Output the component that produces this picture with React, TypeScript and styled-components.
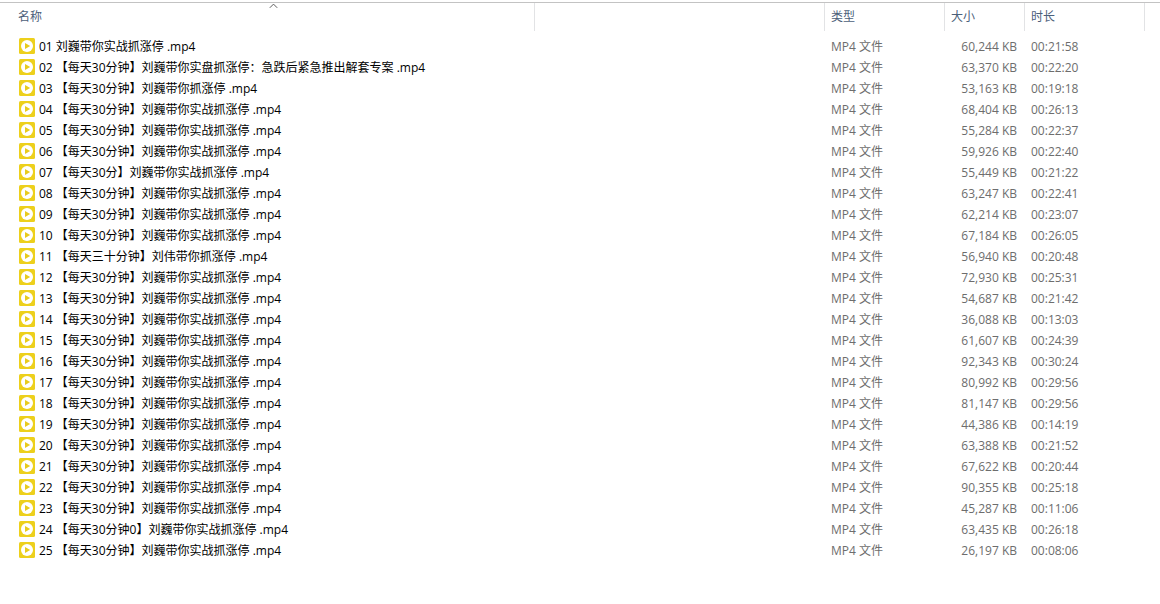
import React from "react";
import styled, { createGlobalStyle } from "styled-components";

const GlobalStyle = createGlobalStyle`
  * { box-sizing: border-box; }
  body {
    margin: 0;
    background: #ffffff;
    font-family: "Open Sans", "Noto Sans CJK SC", sans-serif;
    font-size: 12px;
    line-height: 20px;
    color: #000000;
  }
`;

const FilePane = styled.main`
  margin-top: 2px;
  border-top: 1px solid #c3c3c3;
  padding-left: 12px;
`;

const FileTable = styled.table`
  width: 100%;
  table-layout: fixed;
  border-collapse: separate;
  border-spacing: 0;
`;

const Column = styled.col<{ $width?: number }>`
  width: ${({ $width }) => ($width ? `${$width}px` : "auto")};
`;

const HeaderCell = styled.th<{ $divider?: boolean }>`
  position: relative;
  height: 28px;
  padding: 0;
  font-weight: 400;
  text-align: left;
  vertical-align: middle;
  border-right: 1px solid ${({ $divider = true }) => ($divider ? "#e2e3e5" : "transparent")};
`;

const HeaderButton = styled.button`
  display: block;
  width: 100%;
  border: 0;
  padding: 0 6px;
  background: transparent;
  color: #4c607a;
  font: inherit;
  line-height: 20px;
  text-align: left;
  cursor: default;
`;

const SortCaret = styled.svg`
  position: absolute;
  top: 0;
  left: 50%;
  transform: translateX(-50%);
`;

const FileRows = styled.tbody`
  &::before {
    content: "";
    display: block;
    height: 5px;
  }
`;

const Cell = styled.td<{ $align?: "left" | "right" }>`
  height: 21px;
  padding: 1px 8px 0 6px;
  color: #6d6d6d;
  text-align: ${({ $align = "left" }) => $align};
  vertical-align: top;
  white-space: nowrap;
`;

const FileName = styled.div`
  display: flex;
  align-items: flex-start;
  gap: 4px;
  padding-left: 1px;
  color: #000000;
  white-space: pre;
`;

const FileIcon = styled.svg`
  flex: none;
  margin-top: 1px;
`;

const VideoIcon = () => (
  <FileIcon width="16" height="16" viewBox="0 0 16 16" aria-hidden="true">
    <rect width="16" height="16" rx="1.5" fill="#edd01c" />
    <circle cx="8" cy="8" r="6" fill="#ffffff" />
    <path d="M6 4.9v6.2L11.2 8z" fill="#e8cb1c" />
  </FileIcon>
);

interface VideoFile {
  name: string;
  size: string;
  duration: string;
}

const USUAL = "【每天30分钟】刘巍带你实战抓涨停";

const files: VideoFile[] = [
  { name: "01 刘巍带你实战抓涨停", size: "60,244", duration: "00:21:58" },
  { name: "02 【每天30分钟】刘巍带你实盘抓涨停：急跌后紧急推出解套专案", size: "63,370", duration: "00:22:20" },
  { name: "03 【每天30分钟】刘巍带你抓涨停", size: "53,163", duration: "00:19:18" },
  { name: `04 ${USUAL}`, size: "68,404", duration: "00:26:13" },
  { name: `05 ${USUAL}`, size: "55,284", duration: "00:22:37" },
  { name: `06 ${USUAL}`, size: "59,926", duration: "00:22:40" },
  { name: "07 【每天30分】刘巍带你实战抓涨停", size: "55,449", duration: "00:21:22" },
  { name: `08 ${USUAL}`, size: "63,247", duration: "00:22:41" },
  { name: `09 ${USUAL}`, size: "62,214", duration: "00:23:07" },
  { name: `10 ${USUAL}`, size: "67,184", duration: "00:26:05" },
  { name: "11 【每天三十分钟】刘伟带你抓涨停", size: "56,940", duration: "00:20:48" },
  { name: `12 ${USUAL}`, size: "72,930", duration: "00:25:31" },
  { name: `13 ${USUAL}`, size: "54,687", duration: "00:21:42" },
  { name: `14 ${USUAL}`, size: "36,088", duration: "00:13:03" },
  { name: `15 ${USUAL}`, size: "61,607", duration: "00:24:39" },
  { name: `16 ${USUAL}`, size: "92,343", duration: "00:30:24" },
  { name: `17 ${USUAL}`, size: "80,992", duration: "00:29:56" },
  { name: `18 ${USUAL}`, size: "81,147", duration: "00:29:56" },
  { name: `19 ${USUAL}`, size: "44,386", duration: "00:14:19" },
  { name: `20 ${USUAL}`, size: "63,388", duration: "00:21:52" },
  { name: `21 ${USUAL}`, size: "67,622", duration: "00:20:44" },
  { name: `22 ${USUAL}`, size: "90,355", duration: "00:25:18" },
  { name: `23 ${USUAL}`, size: "45,287", duration: "00:11:06" },
  { name: "24 【每天30分钟0】刘巍带你实战抓涨停", size: "63,435", duration: "00:26:18" },
  { name: `25 ${USUAL}`, size: "26,197", duration: "00:08:06" },
];

export default function App() {
  return (
    <>
      <GlobalStyle />
      <FilePane lang="zh-CN">
        <FileTable>
          <colgroup>
            <Column />
            <Column $width={290} />
            <Column $width={120} />
            <Column $width={80} />
            <Column $width={120} />
            <Column $width={15} />
          </colgroup>
          <thead>
            <tr>
              <HeaderCell scope="col" aria-sort="ascending">
                <HeaderButton type="button">名称</HeaderButton>
                <SortCaret width="10" height="6" viewBox="0 0 10 6" aria-hidden="true">
                  <path d="M1.8 4.8 5.5 1.1l3.7 3.7" fill="none" stroke="#5c5c5c" />
                </SortCaret>
              </HeaderCell>
              <HeaderCell as="td" />
              <HeaderCell scope="col">
                <HeaderButton type="button">类型</HeaderButton>
              </HeaderCell>
              <HeaderCell scope="col">
                <HeaderButton type="button">大小</HeaderButton>
              </HeaderCell>
              <HeaderCell scope="col">
                <HeaderButton type="button">时长</HeaderButton>
              </HeaderCell>
              <HeaderCell as="td" $divider={false} />
            </tr>
          </thead>
          <FileRows>
            {files.map((file) => (
              <tr key={file.name}>
                <Cell>
                  <FileName>
                    <VideoIcon />
                    <span>{file.name} .mp4</span>
                  </FileName>
                </Cell>
                <Cell />
                <Cell>MP4 文件</Cell>
                <Cell $align="right">{file.size} KB</Cell>
                <Cell>{file.duration}</Cell>
                <Cell />
              </tr>
            ))}
          </FileRows>
        </FileTable>
      </FilePane>
    </>
  );
}
